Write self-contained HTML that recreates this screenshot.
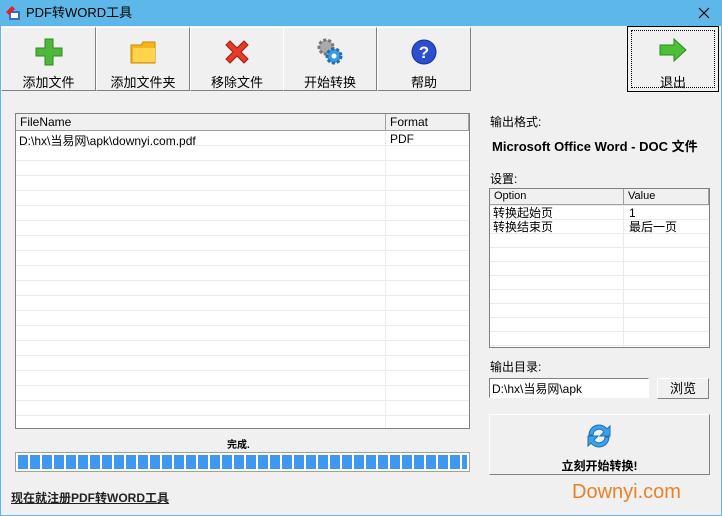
<!DOCTYPE html><html><head><meta charset="utf-8"><style>
*{margin:0;padding:0;box-sizing:border-box}
body{width:722px;height:516px;background:#f0f0f0;font-family:"Liberation Sans","Noto Sans CJK SC",sans-serif;font-size:12px;color:#000;position:relative;overflow:hidden}
.a{position:absolute}
.title{left:0;top:0;width:722px;height:26px;background:#5db7e8}
.tb{top:27px;height:64px;background:#f0f0f0;border:1px solid;border-color:#fff #808080 #808080 #fff;text-align:center}
.tb span{position:absolute;left:0;right:0;top:47px;font-size:13px;line-height:16px}
.tb svg{position:absolute;left:50%;margin-left:-15px;top:9px}
.list{left:15px;top:113px;width:455px;height:316px;background:#fff;border:1px solid #808080;
background-image:repeating-linear-gradient(#fff 0 14px,#ebebeb 14px 15px);background-position:0 17px;}
.hdr{background:#f0f0f0;height:17px;border-bottom:1px solid #a0a0a0;border-right:1px solid #a0a0a0;font-size:12px;line-height:16px;padding-left:4px}
</style></head><body>
<div class="a title"></div>
<div class="a" style="left:0;top:0;width:722px;height:516px;border:1px solid #5db7e8;pointer-events:none"></div>
<svg class="a" style="left:5px;top:5px" width="16" height="16"><rect x="4" y="6" width="11" height="9" fill="#3a6fc0"/><rect x="6" y="8" width="7" height="5" fill="#fff"/><path d="M1 7 L7 1 L10 4 L4 10Z" fill="#d23"/></svg>
<div class="a" style="left:26px;top:5px;font-size:13px;line-height:16px">PDF转WORD工具</div>
<svg class="a" style="left:698px;top:7px" width="12" height="12"><path d="M1 1L11 11M11 1L1 11" stroke="#000" stroke-width="1.2"/></svg>

<div class="a tb" style="left:1px;width:95px"><svg width="30" height="30"><path d="M11 2h8v9h9v8h-9v9h-8v-9h-9v-8h9z" fill="#4fb83a" stroke="#2d8a22"/></svg><span>添加文件</span></div>
<div class="a tb" style="left:96px;width:94px"><svg width="30" height="30"><path d="M3 8h10l2-3h12v21H3z" fill="#f5b418" stroke="#c98a0a"/><rect x="5" y="11" width="22" height="14" fill="#ffd34a"/></svg><span>添加文件夹</span></div>
<div class="a tb" style="left:190px;width:94px"><svg width="30" height="30"><path d="M4 8l4-4 7 7 7-7 4 4-7 7 7 7-4 4-7-7-7 7-4-4 7-7z" fill="#e33c2c" stroke="#a51a10"/></svg><span>移除文件</span></div>
<div class="a tb" style="left:283px;width:94px"><svg width="30" height="30"><circle cx="11" cy="10" r="7" fill="#aaa" stroke="#777" stroke-dasharray="3 2" stroke-width="3"/><circle cx="19" cy="19" r="7" fill="#3d9ae0" stroke="#1f6fb0" stroke-dasharray="3 2" stroke-width="3"/><circle cx="19" cy="19" r="2.5" fill="#fff"/></svg><span>开始转换</span></div>
<div class="a tb" style="left:377px;width:94px"><svg width="30" height="30"><circle cx="15" cy="15" r="12" fill="#2b4fd0" stroke="#1a2f90"/><text x="15" y="21" font-size="17" font-weight="bold" fill="#fff" text-anchor="middle" font-family="Liberation Sans">?</text></svg><span>帮助</span></div>
<div class="a" style="left:627px;top:26px;width:92px;height:66px;border:1px solid #000;background:#f0f0f0"><div style="position:absolute;left:3px;top:3px;right:3px;bottom:3px;border:1px dotted #000"></div><svg class="a" style="left:30px;top:10px" width="30" height="26"><path d="M2 8h14V2l12 11-12 11v-6H2z" fill="#4fbf3a" stroke="#2a8a1e"/></svg><span class="a" style="left:0;right:0;top:48px;text-align:center;font-size:13px;line-height:16px">退出</span></div>

<div class="a list"><div class="hdr" style="position:absolute;left:0;top:0;width:370px">FileName</div><div class="hdr" style="position:absolute;left:370px;top:0;width:83px">Format</div>
<div class="a" style="left:369px;top:17px;width:1px;bottom:0;background:#ebebeb"></div>
<div class="a" style="left:3px;top:18px;font-size:12px">D:\hx\当易网\apk\downyi.com.pdf</div>
<div class="a" style="left:374px;top:18px;font-size:12px">PDF</div></div>

<div class="a" style="left:227px;top:436px;font-size:10px;font-weight:bold">完成.</div>
<div class="a" style="left:15px;top:452px;width:455px;height:20px;border:1px solid #a0a0a0;background:#fff;padding:2px">
<div style="width:100%;height:100%;background:repeating-linear-gradient(90deg,#3f97ef 0 10px,#fff 10px 12px)"></div></div>
<div class="a" style="left:11px;top:489px;font-size:12px;font-weight:bold;text-decoration:underline;color:#222">现在就注册PDF转WORD工具</div>

<div class="a" style="left:490px;top:113px;font-size:12px">输出格式:</div>
<div class="a" style="left:492px;top:136px;font-size:13px;font-weight:bold">Microsoft Office Word - DOC 文件</div>
<div class="a" style="left:490px;top:170px;font-size:12px">设置:</div>
<div class="a" style="left:489px;top:188px;width:221px;height:160px;border:1px solid #808080;background:#fff;background-image:repeating-linear-gradient(#fff 0 13px,#ebebeb 13px 14px);background-position:0 3px">
<div class="hdr" style="position:absolute;left:0;top:0;width:134px;height:16px;line-height:15px;font-size:11px">Option</div><div class="hdr" style="position:absolute;left:134px;top:0;width:85px;height:16px;line-height:15px;font-size:11px">Value</div>
<div class="a" style="left:133px;top:16px;width:1px;bottom:0;background:#ebebeb"></div>
<div class="a" style="left:3px;top:17px;line-height:14px">转换起始页<br>转换结束页</div>
<div class="a" style="left:139px;top:17px;line-height:14px">1<br>最后一页</div></div>
<div class="a" style="left:490px;top:358px">输出目录:</div>
<div class="a" style="left:489px;top:378px;width:160px;height:20px;border:1px solid;border-color:#808080 #fff #fff #808080;background:#fff;padding:1px 2px">D:\hx\当易网\apk</div>
<div class="a" style="left:657px;top:378px;width:52px;height:21px;border:1px solid;border-color:#fff #808080 #808080 #fff;text-align:center;line-height:19px;font-size:13px">浏览</div>
<div class="a" style="left:489px;top:414px;width:221px;height:61px;border:1px solid;border-color:#fff #808080 #808080 #fff">
<svg class="a" style="left:95px;top:6px" width="28" height="30"><path d="M4 14a10 10 0 0 1 18-6l3-3v10h-10l4-4a6 6 0 0 0-11 3z" fill="#3da0e8" stroke="#1a70b8"/><path d="M24 16a10 10 0 0 1-18 6l-3 3V15h10l-4 4a6 6 0 0 0 11-3z" fill="#3da0e8" stroke="#1a70b8"/></svg>
<div class="a" style="left:0;right:0;top:42px;text-align:center;font-weight:bold;font-size:12px">立刻开始转换!</div></div>
<div class="a" style="left:572px;top:481px;font-size:20px;color:#e8822a">Downyi.com</div>
</body></html>
